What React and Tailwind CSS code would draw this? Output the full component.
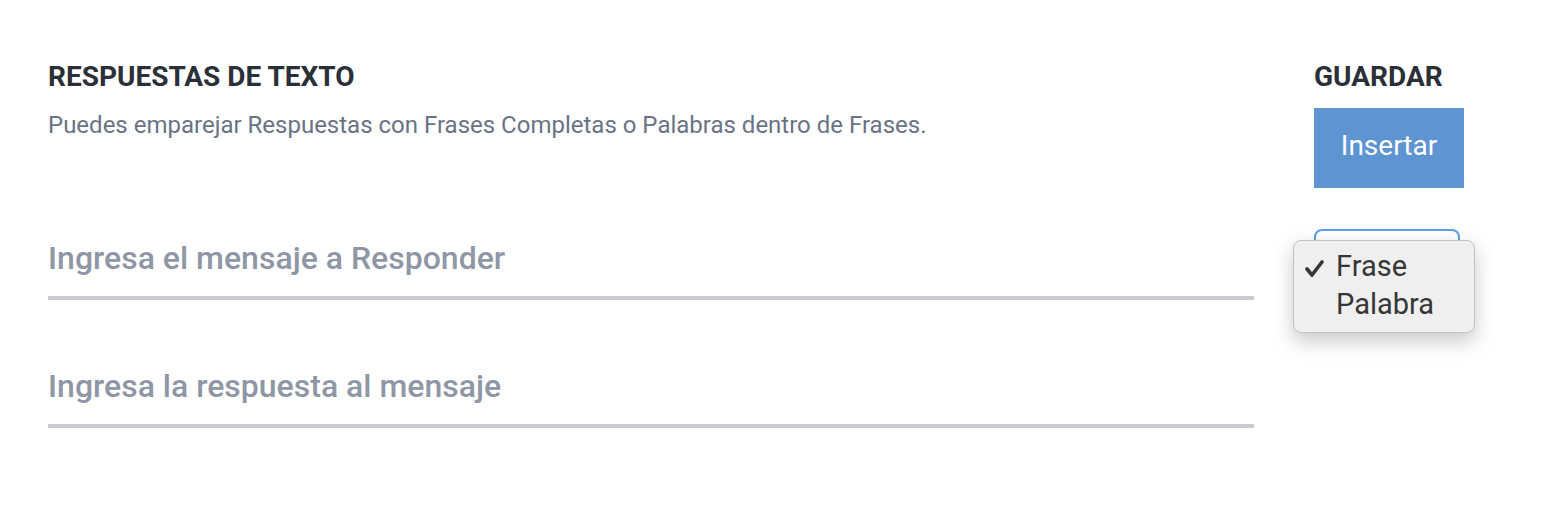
import React from "react";

const FONT = { fontFamily: "Roboto, 'Liberation Sans', sans-serif" };

export default function App() {
  return (
    <div className="w-[1546px] h-[510px] bg-white flex" style={FONT}>
      {/* ── left: text answers ─────────────────────────── */}
      <div className="ml-[48px] w-[1206px] pt-[63px]">
        <h2 className="text-[28px] leading-none font-bold text-[#2b3038]">RESPUESTAS DE TEXTO</h2>
        <p className="mt-[22px] text-[24px] leading-none text-[#6a7386]">
          Puedes emparejar Respuestas con Frases Completas o Palabras dentro de Frases.
        </p>

        <input
          placeholder="Ingresa el mensaje a Responder"
          className="block mt-[105px] w-full h-[58px] p-0 pb-[22px] leading-none border-b-4 border-[#c8cbd1] outline-none text-[32px] font-medium placeholder:text-[#8f97a6] bg-transparent"
        />
        <input
          placeholder="Ingresa la respuesta al mensaje"
          className="block mt-[70px] w-full h-[58px] p-0 pb-[22px] leading-none border-b-4 border-[#c8cbd1] outline-none text-[32px] font-medium placeholder:text-[#8f97a6] bg-transparent"
        />
      </div>

      {/* ── right: save ────────────────────────────────── */}
      <div className="ml-[60px] w-[150px] pt-[63px]">
        <h2 className="text-[28px] leading-none font-bold text-[#2b3038]">GUARDAR</h2>
        <button className="mt-[17px] w-[150px] h-[80px] pb-[4px] flex items-center justify-center bg-[#5e94d1] text-white text-[28px]">
          Insertar
        </button>

        <div className="relative mt-[41px] w-[146px]">
          <div className="h-[36px] rounded-[8px] border-2 border-[#5aa0ec] bg-white" />
          <div className="absolute left-[-21px] top-[11px] w-[182px] h-[93px] rounded-[8px] bg-[#efefef] border border-[#c2c2c2] shadow-[0_8px_20px_rgba(0,0,0,0.22)] pt-[7px] text-[29px] leading-[37.5px] text-[#363636]">
            <div className="flex items-center">
              <span className="w-[42px] flex items-center pl-[11px] pt-[3px]">
                <svg width="19" height="17" viewBox="0 0 19 17" fill="none">
                  <path d="M2 9 L7 15 L17 2" stroke="#363636" strokeWidth="3.6" strokeLinecap="round" strokeLinejoin="round" />
                </svg>
              </span>
              <span>Frase</span>
            </div>
            <div className="flex items-center">
              <span className="w-[42px]" />
              <span>Palabra</span>
            </div>
          </div>
        </div>
      </div>
    </div>
  );
}
